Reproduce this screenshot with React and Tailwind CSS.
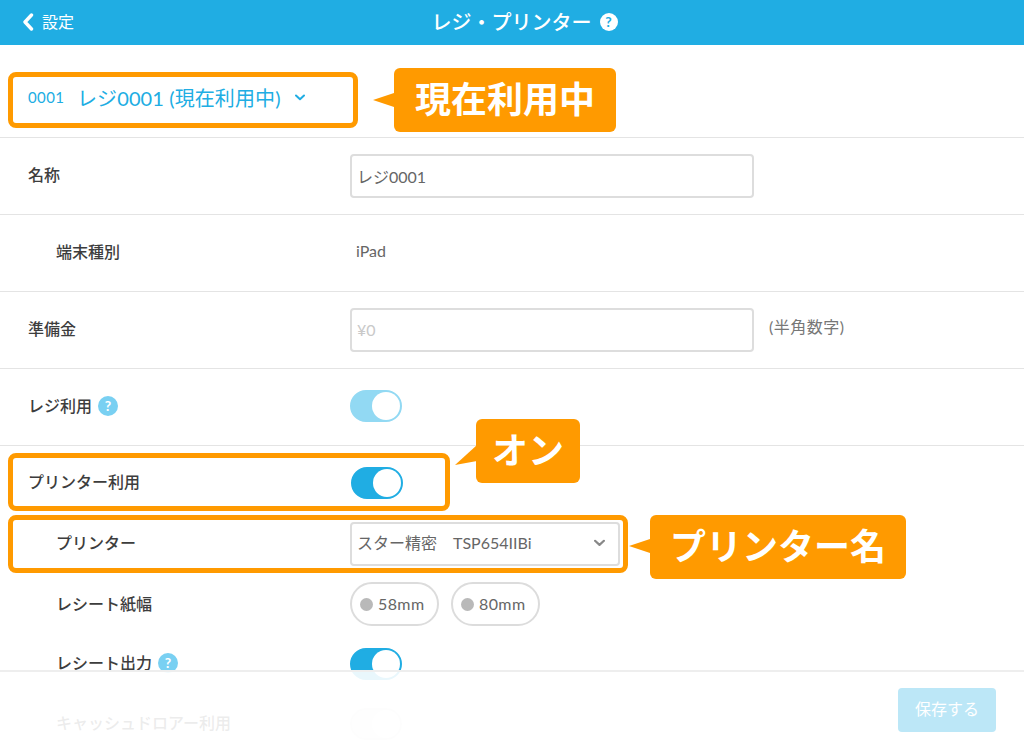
const font = { fontFamily: '"Lato", "Noto Sans CJK JP", sans-serif' }

function Help({ className }) {
  return (
    <span className={`inline-flex items-center justify-center rounded-full text-[14px] font-bold leading-none ${className}`}>?</span>
  )
}

function Toggle({ on, faded }) {
  const track = faded ? 'bg-[#92d9f3] border-[#92d9f3]' : on ? 'bg-[#20ade3] border-[#20ade3]' : 'bg-[#f4f4f4] border-[#eeeeee]'
  return (
    <div className={`w-[52px] h-[32px] rounded-full border-2 flex justify-end ${track}`}>
      <div className="w-[28px] h-[28px] rounded-full bg-white" />
    </div>
  )
}

function Row({ label, indent, h, border, children, help }) {
  return (
    <div className={`flex items-center ${h} ${border ? 'border-b border-[#e4e4e4]' : ''}`}>
      <div className={`w-[350px] shrink-0 flex items-center gap-[6px] pb-[3px] text-[16px] font-medium text-[#3d3d3d] ${indent ? 'pl-[56px]' : 'pl-[28px]'}`}>
        {label}
        {help && <Help className="w-[20px] h-[20px] bg-[#79d0f2] text-white" />}
      </div>
      {children}
    </div>
  )
}

function Radio({ label, w }) {
  return (
    <div className={`h-[44px] ${w} rounded-full border-2 border-[#dcdcdc] flex items-center pl-[8px] gap-[5px] text-[16px] tracking-[0.4px] text-[#666666]`}>
      <span className="w-[13px] h-[13px] rounded-full bg-[#b9b9b9]" />
      {label}
    </div>
  )
}

function Chevron({ className, color, width = 2 }) {
  return (
    <svg className={className} viewBox="0 0 10 7" fill="none">
      <path d="M1 1.5 L5 5.2 L9 1.5" stroke={color} strokeWidth={width} strokeLinecap="round" strokeLinejoin="round" />
    </svg>
  )
}

function Callout({ className, children, text }) {
  return (
    <div className={`absolute bg-[#ff9a00] rounded-[6px] text-white font-semibold text-[36px] flex items-center justify-center ${className}`}>
      {text}
      {children}
    </div>
  )
}

export default function App() {
  return (
    <div style={font} className="relative w-[1024px] h-[748px] overflow-hidden bg-white">
      <div className="h-[45px] bg-[#20ade3] relative flex items-center justify-center text-white">
        <div className="absolute left-[22px] top-0 h-[45px] flex items-center gap-[8px] text-[16px] pb-[2px]">
          <svg width="12" height="18" viewBox="0 0 12 18" fill="none">
            <path d="M9.5 2 L3 9 L9.5 16" stroke="white" strokeWidth="3.4" strokeLinecap="round" strokeLinejoin="round" />
          </svg>
          設定
        </div>
        <div className="flex items-center gap-[8px] text-[20px] font-medium pb-[2px] pl-[25px]">
          レジ・プリンター
          <Help className="w-[18px] h-[18px] bg-white text-[#20ade3]" />
        </div>
      </div>

      <div className="h-[93px] border-b border-[#e4e4e4] flex items-center pl-[28px] pt-[13px] text-[#20ade3]">
        <span className="text-[15px] tracking-[0.4px] w-[51px]">0001</span>
        <span className="text-[20px] -ml-[2px] tracking-[0.1px]">レジ0001 (現在利用中)</span>
        <Chevron className="w-[10px] h-[7px] ml-[14px]" color="#20ade3" />
      </div>

      <Row label="名称" h="h-[77px]" border>
        <div className="w-[404px] h-[44px] rounded-[4px] border-2 border-[#dddddd] flex items-center pl-[5px] pt-[2px] text-[16px] text-[#666666]">レジ0001</div>
      </Row>
      <Row label="端末種別" indent h="h-[77px]" border>
        <span className="text-[16px] text-[#666666] pl-[6px] pb-[4px]">iPad</span>
      </Row>
      <Row label="準備金" h="h-[77px]" border>
        <div className="w-[404px] h-[44px] rounded-[4px] border-2 border-[#dddddd] flex items-center pl-[5px] text-[16px] text-[#c9c9c9]">¥0</div>
        <span className="ml-[15px] pb-[6px] text-[16px] tracking-[0.5px] text-[#777777]">(半角数字)</span>
      </Row>
      <Row label="レジ利用" help h="h-[77px]" border>
        <div className="pb-[2px]"><Toggle on faded /></div>
      </Row>

      <Row label="プリンター利用" h="h-[74px]">
        <div className="ml-px"><Toggle on /></div>
      </Row>
      <Row label="プリンター" indent h="h-[48px]">
        <div className="w-[270px] h-[44px] rounded-[4px] border-2 border-[#dddddd] flex items-center justify-between pl-[5px] pr-[13px] pb-[2px] text-[16px] text-[#666666]">
          <span>スター精密　TSP654IIBi</span>
          <Chevron className="w-[11px] h-[8px]" color="#888888" />
        </div>
      </Row>
      <Row label="レシート紙幅" indent h="h-[74px]">
        <div className="flex gap-[12px] pb-[2px]">
          <Radio label="58mm" w="w-[89px]" />
          <Radio label="80mm" w="w-[89px]" />
        </div>
      </Row>
      <Row label="レシート出力" indent help h="h-[44px]">
        <Toggle on />
      </Row>
      <Row label="キャッシュドロアー利用" indent h="h-[76px]">
        <Toggle />
      </Row>

      {/* save bar sits over the scrolling rows */}
      <div className="absolute left-0 bottom-0 w-full h-[78px] bg-white/90 border-t-2 border-[#eeeeee] flex justify-end items-start pt-[16px] pr-[28px]">
        <div className="w-[98px] h-[44px] rounded-[4px] bg-[#bce7f7] text-white text-[16px] flex items-center justify-center pb-[2px]">保存する</div>
      </div>

      {/* annotations */}
      <div className="absolute left-[8px] top-[72px] w-[350px] h-[56px] rounded-[8px] border-[5px] border-[#ff9a00]" />
      <div className="absolute left-[8px] top-[453px] w-[442px] h-[58px] rounded-[8px] border-[5px] border-[#ff9a00]" />
      <div className="absolute left-[8px] top-[515px] w-[620px] h-[58px] rounded-[8px] border-[5px] border-[#ff9a00]" />

      <Callout className="left-[394px] top-[68px] w-[222px] h-[64px] pb-[3px]" text="現在利用中">
        <span className="absolute -left-[21px] top-[25px] border-y-[7px] border-y-transparent border-r-[21px] border-r-[#ff9a00] w-0 h-0" />
      </Callout>
      <Callout className="left-[476px] top-[419px] w-[104px] h-[64px] pb-[3px]" text="オン">
        <svg className="absolute -left-[21px] top-[26px]" width="22" height="21" viewBox="0 0 22 21"><path d="M22 0 L0 20 L22 16 Z" fill="#ff9a00" /></svg>
      </Callout>
      <Callout className="left-[650px] top-[515px] w-[256px] h-[64px] pb-[3px]" text="プリンター名">
        <span className="absolute -left-[21px] top-[24px] border-y-[7px] border-y-transparent border-r-[21px] border-r-[#ff9a00] w-0 h-0" />
      </Callout>
    </div>
  )
}
